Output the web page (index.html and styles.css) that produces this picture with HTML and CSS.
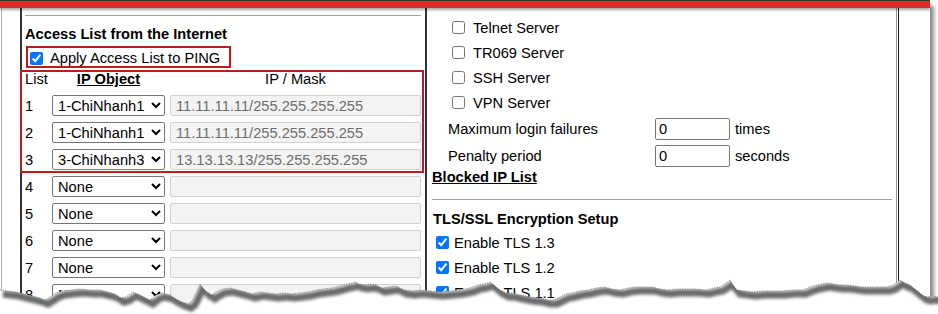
FILE: index.html
```html
<!DOCTYPE html>
<html lang="en">
<head>
    <meta charset="UTF-8">
    <meta name="viewport" content="width=device-width, initial-scale=1.0">
    <title>Access List Setup</title>
    <link rel="stylesheet" href="styles.css">
</head>
<body>

    <div class="frame">
        <div class="topbar"></div>

        <div class="main">
            <div class="gutter"></div>

            <!-- Access list -->
            <div class="panel panel-left">
                <hr class="rule">
                <div class="title">Access List from the Internet</div>

                <label class="mark mark-ping">
                    <input type="checkbox" checked>
                    <span>Apply Access List to PING</span>
                </label>

                <div class="mark mark-list">
                    <div class="row head">
                        <span class="num">List</span>
                        <span class="col-obj"><b><u>IP Object</u></b></span>
                        <span class="col-mask">IP / Mask</span>
                    </div>
                    <div class="row">
                        <span class="num">1</span>
                        <select class="obj"><option>1-ChiNhanh1</option></select>
                        <input class="mask" type="text" value="11.11.11.11/255.255.255.255" disabled>
                    </div>
                    <div class="row">
                        <span class="num">2</span>
                        <select class="obj"><option>1-ChiNhanh1</option></select>
                        <input class="mask" type="text" value="11.11.11.11/255.255.255.255" disabled>
                    </div>
                    <div class="row">
                        <span class="num">3</span>
                        <select class="obj"><option>3-ChiNhanh3</option></select>
                        <input class="mask" type="text" value="13.13.13.13/255.255.255.255" disabled>
                    </div>
                </div>

                <div class="rows-rest">
                    <div class="row">
                        <span class="num">4</span>
                        <select class="obj"><option>None</option></select>
                        <input class="mask" type="text" disabled>
                    </div>
                    <div class="row">
                        <span class="num">5</span>
                        <select class="obj"><option>None</option></select>
                        <input class="mask" type="text" disabled>
                    </div>
                    <div class="row">
                        <span class="num">6</span>
                        <select class="obj"><option>None</option></select>
                        <input class="mask" type="text" disabled>
                    </div>
                    <div class="row">
                        <span class="num">7</span>
                        <select class="obj"><option>None</option></select>
                        <input class="mask" type="text" disabled>
                    </div>
                    <div class="row">
                        <span class="num">8</span>
                        <select class="obj"><option>None</option></select>
                        <input class="mask" type="text" disabled>
                    </div>
                </div>
            </div>

            <!-- Services / TLS -->
            <div class="panel panel-right">
                <div class="checks">
                    <label class="chk-row"><input type="checkbox"><span>Telnet Server</span></label>
                    <label class="chk-row"><input type="checkbox"><span>TR069 Server</span></label>
                    <label class="chk-row"><input type="checkbox"><span>SSH Server</span></label>
                    <label class="chk-row"><input type="checkbox"><span>VPN Server</span></label>
                </div>

                <div class="field">
                    <span class="field-label">Maximum login failures</span>
                    <input class="small-in" type="text" value="0">
                    <span>times</span>
                </div>
                <div class="field">
                    <span class="field-label">Penalty period</span>
                    <input class="small-in" type="text" value="0">
                    <span>seconds</span>
                </div>

                <div class="blocked">Blocked IP List</div>
                <hr class="rule rule-r">

                <div class="title tls-title">TLS/SSL Encryption Setup</div>
                <div class="tls">
                    <label class="tls-row"><input type="checkbox" checked><span>Enable TLS 1.3</span></label>
                    <label class="tls-row"><input type="checkbox" checked><span>Enable TLS 1.2</span></label>
                    <label class="tls-row"><input type="checkbox" checked><span>Enable TLS 1.1</span></label>
                </div>
            </div>

            <div class="edge"></div>
        </div>
    </div>

    <!-- torn paper edge -->
    <svg class="tear" width="938" height="84" viewBox="0 0 938 84">
        <defs>
            <clipPath id="below">
                <polygon points="0,60 8,61 16,62 24,64 32,66 40,68 45,70 50,67 56,63 62,61 70,60 80,59 90,60 100,60 108,62 115,64 121,68 126,67 133,62 140,65 146,68 150,70 156,65 162,63 170,65 176,69 182,72 188,74 192,71 196,63 200,54 203,58 207,62 212,65 216,62 222,59 230,58 238,60 246,62 252,64 260,62 268,63 276,64 284,63 292,64 300,63 308,62 316,60 324,59 332,58 340,56 347,54 352,53 355,52 359,54 365,55 370,54 376,55 382,58 388,57 396,56 404,60 412,61 420,60 430,61 440,62 450,61 460,60 470,58 478,55 484,54 490,52 494,55 500,60 506,63 512,63 520,65 530,67 540,68 548,70 554,70 560,67 566,64 572,63 580,61 588,60 596,58 604,57 612,59 620,60 628,58 636,57 644,57 652,57 660,59 668,60 676,59 686,59 696,59 706,60 714,58 720,57 726,53 730,50 733,55 737,60 745,61 753,62 762,61 772,61 782,61 792,60 803,60 810,57 817,55 822,54 827,53 833,54 840,55 847,55 855,56 862,57 870,57 878,57 887,57 893,55 897,52 900,50 905,53 910,55 915,59 920,63 924,66 928,67 933,66 938,67 938,84 0,84"/>
            </clipPath>
            <filter id="soft" x="-5%" y="-50%" width="110%" height="200%">
                <feGaussianBlur stdDeviation="1.8"/>
            </filter>
        </defs>
        <polygon class="paper" points="0,60 8,61 16,62 24,64 32,66 40,68 45,70 50,67 56,63 62,61 70,60 80,59 90,60 100,60 108,62 115,64 121,68 126,67 133,62 140,65 146,68 150,70 156,65 162,63 170,65 176,69 182,72 188,74 192,71 196,63 200,54 203,58 207,62 212,65 216,62 222,59 230,58 238,60 246,62 252,64 260,62 268,63 276,64 284,63 292,64 300,63 308,62 316,60 324,59 332,58 340,56 347,54 352,53 355,52 359,54 365,55 370,54 376,55 382,58 388,57 396,56 404,60 412,61 420,60 430,61 440,62 450,61 460,60 470,58 478,55 484,54 490,52 494,55 500,60 506,63 512,63 520,65 530,67 540,68 548,70 554,70 560,67 566,64 572,63 580,61 588,60 596,58 604,57 612,59 620,60 628,58 636,57 644,57 652,57 660,59 668,60 676,59 686,59 696,59 706,60 714,58 720,57 726,53 730,50 733,55 737,60 745,61 753,62 762,61 772,61 782,61 792,60 803,60 810,57 817,55 822,54 827,53 833,54 840,55 847,55 855,56 862,57 870,57 878,57 887,57 893,55 897,52 900,50 905,53 910,55 915,59 920,63 924,66 928,67 933,66 938,67 938,84 0,84"/>
        <g clip-path="url(#below)">
            <polyline class="tear-shadow" filter="url(#soft)" transform="translate(3,4)" points="0,60 8,61 16,62 24,64 32,66 40,68 45,70 50,67 56,63 62,61 70,60 80,59 90,60 100,60 108,62 115,64 121,68 126,67 133,62 140,65 146,68 150,70 156,65 162,63 170,65 176,69 182,72 188,74 192,71 196,63 200,54 203,58 207,62 212,65 216,62 222,59 230,58 238,60 246,62 252,64 260,62 268,63 276,64 284,63 292,64 300,63 308,62 316,60 324,59 332,58 340,56 347,54 352,53 355,52 359,54 365,55 370,54 376,55 382,58 388,57 396,56 404,60 412,61 420,60 430,61 440,62 450,61 460,60 470,58 478,55 484,54 490,52 494,55 500,60 506,63 512,63 520,65 530,67 540,68 548,70 554,70 560,67 566,64 572,63 580,61 588,60 596,58 604,57 612,59 620,60 628,58 636,57 644,57 652,57 660,59 668,60 676,59 686,59 696,59 706,60 714,58 720,57 726,53 730,50 733,55 737,60 745,61 753,62 762,61 772,61 782,61 792,60 803,60 810,57 817,55 822,54 827,53 833,54 840,55 847,55 855,56 862,57 870,57 878,57 887,57 893,55 897,52 900,50 905,53 910,55 915,59 920,63 924,66 928,67 933,66 938,67"/>
        </g>
        <polyline class="tear-line" points="0,60 8,61 16,62 24,64 32,66 40,68 45,70 50,67 56,63 62,61 70,60 80,59 90,60 100,60 108,62 115,64 121,68 126,67 133,62 140,65 146,68 150,70 156,65 162,63 170,65 176,69 182,72 188,74 192,71 196,63 200,54 203,58 207,62 212,65 216,62 222,59 230,58 238,60 246,62 252,64 260,62 268,63 276,64 284,63 292,64 300,63 308,62 316,60 324,59 332,58 340,56 347,54 352,53 355,52 359,54 365,55 370,54 376,55 382,58 388,57 396,56 404,60 412,61 420,60 430,61 440,62 450,61 460,60 470,58 478,55 484,54 490,52 494,55 500,60 506,63 512,63 520,65 530,67 540,68 548,70 554,70 560,67 566,64 572,63 580,61 588,60 596,58 604,57 612,59 620,60 628,58 636,57 644,57 652,57 660,59 668,60 676,59 686,59 696,59 706,60 714,58 720,57 726,53 730,50 733,55 737,60 745,61 753,62 762,61 772,61 782,61 792,60 803,60 810,57 817,55 822,54 827,53 833,54 840,55 847,55 855,56 862,57 870,57 878,57 887,57 893,55 897,52 900,50 905,53 910,55 915,59 920,63 924,66 928,67 933,66 938,67"/>
    </svg>

</body>
</html>
```

FILE: styles.css
```css
/* General Page Styling */
body {
    font-family: "Liberation Sans", Arial, sans-serif;
    font-size: 11pt;
    color: #000;
    background: #fff;
    margin: 0;
    overflow: hidden;
}

.frame {
    width: 930px;
    height: 314px;
    background: #fff;
    box-shadow: 4px 6px 4px rgba(0, 0, 0, 0.45);
}

.topbar {
    position: relative;
    z-index: 1;
    height: 7px;
    border-top: 1px solid #333;
    background: #d9302b;
    box-shadow: 0 2px 3px rgba(0, 0, 0, 0.35);
}

.main {
    display: flex;
    height: 306px;
    margin-left: 1px;
    border-left: 1px solid #b0b0b0;
}

.gutter {
    width: 18px;
}

.panel {
    box-sizing: border-box;
}

.panel-left {
    width: 407px;
    border-left: 2px solid #333;
    border-right: 2px solid #333;
    padding-left: 3px;
}

.panel-right {
    width: 470px;
    border-right: 1px solid #999;
}

.edge {
    width: 1px;
    margin-left: 1px;
    background: #222;
}

/* Common bits */
.rule {
    height: 0;
    border: 0;
    border-top: 1px solid #a0a0a0;
    margin: 7px 4px 0 0;
}

.title {
    margin-top: 10px;
    font-weight: bold;
    line-height: 17px;
}

input[type="checkbox"] {
    width: 13px;
    height: 13px;
    margin: 0;
}

/* Red annotation boxes */
.mark {
    border: 2px solid #bf1a1f;
    box-sizing: border-box;
}

.mark-ping {
    display: flex;
    align-items: flex-start;
    width: 205px;
    height: 22px;
    margin: 3px 0 0 1px;
}

.mark-ping input {
    margin: 4px 7px 0 2px;
}

.mark-ping span {
    padding-top: 2px;
    line-height: 17px;
}

.mark-list {
    width: 404px;
    margin: 2px 0 0 -5px;
    padding: 0 0 1px 3px;
}

/* Access list rows */
.row {
    display: flex;
    align-items: center;
    height: 21px;
    margin-bottom: 6px;
}

.mark-list .row:last-child {
    margin-bottom: 0;
}

.row.head {
    height: 23px;
    margin: 0;
    align-items: flex-start;
    line-height: 14px;
}

.rows-rest {
    margin-top: 3px;
}

.num {
    width: 27px;
}

.col-obj {
    width: 113px;
    margin-right: 5px;
    text-align: center;
}

.col-mask {
    width: 251px;
    text-align: center;
}

select.obj {
    width: 113px;
    height: 21px;
    margin-right: 5px;
    padding: 0 0 0 1px;
    font: inherit;
    color: #000;
    background: #fff;
    border: 1px solid #767676;
    border-radius: 2px;
}

input.mask {
    width: 251px;
    height: 21px;
    box-sizing: border-box;
    padding: 0 5px;
    font: inherit;
    color: #6d6d6d;
    background: #f3f3f3;
    border: 1px solid #d2d2d2;
    border-radius: 2px;
}

/* Right side */
.checks {
    padding-top: 7px;
}

.chk-row {
    display: flex;
    align-items: center;
    height: 25px;
    padding-left: 25px;
}

.chk-row input {
    margin-right: 8px;
}

.field {
    display: flex;
    align-items: center;
    height: 27px;
    padding-left: 21px;
}

.field-label {
    width: 207px;
}

.small-in {
    width: 75px;
    height: 22px;
    box-sizing: border-box;
    margin-right: 5px;
    padding: 0 3px;
    font: inherit;
    border: 1px solid #767676;
    border-radius: 2px;
}

.blocked {
    margin-left: 5px;
    font-weight: bold;
    text-decoration: underline;
    line-height: 17px;
}

.rule-r {
    margin: 13px 4px 0 5px;
}

.tls-title {
    margin: 11px 0 0 6px;
}

.tls {
    margin-top: 2px;
}

.tls-row {
    display: flex;
    align-items: center;
    height: 25px;
    padding-left: 9px;
}

.tls-row input {
    margin-right: 5px;
}

/* Torn edge */
.tear {
    position: absolute;
    left: 0;
    top: 230px;
}

.tear .paper {
    fill: #fff;
}

.tear-shadow {
    fill: none;
    stroke: #6a6a6a;
    stroke-width: 7;
}

.tear-line {
    fill: none;
    stroke: #555;
    stroke-width: 0.6;
    stroke-dasharray: 1.5 1;
}
```
